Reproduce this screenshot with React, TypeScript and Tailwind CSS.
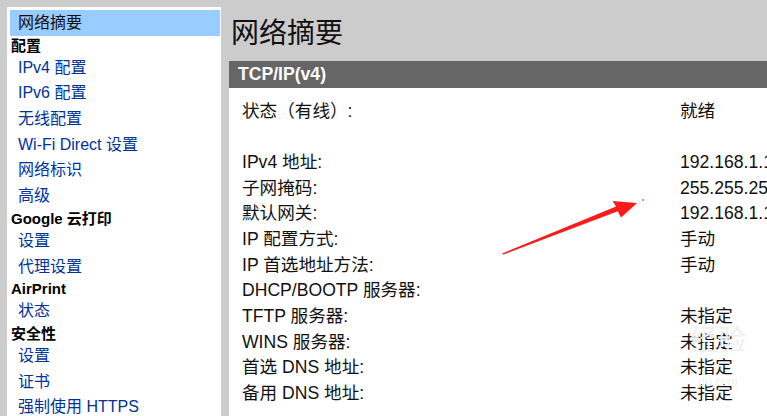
const SANS = 'font-["Liberation_Sans","Noto_Sans_CJK_SC",sans-serif]'

type NavItem = { label: string; kind: 'active' | 'head' | 'link' }

const NAV: NavItem[] = [
  { label: '网络摘要', kind: 'active' },
  { label: '配置', kind: 'head' },
  { label: 'IPv4 配置', kind: 'link' },
  { label: 'IPv6 配置', kind: 'link' },
  { label: '无线配置', kind: 'link' },
  { label: 'Wi-Fi Direct 设置', kind: 'link' },
  { label: '网络标识', kind: 'link' },
  { label: '高级', kind: 'link' },
  { label: 'Google 云打印', kind: 'head' },
  { label: '设置', kind: 'link' },
  { label: '代理设置', kind: 'link' },
  { label: 'AirPrint', kind: 'head' },
  { label: '状态', kind: 'link' },
  { label: '安全性', kind: 'head' },
  { label: '设置', kind: 'link' },
  { label: '证书', kind: 'link' },
  { label: '强制使用 HTTPS', kind: 'link' },
]

// null = empty spacer row
const ROWS: ([string, string] | null)[] = [
  ['状态（有线）:', '就绪'],
  null,
  ['IPv4 地址:', '192.168.1.100'],
  ['子网掩码:', '255.255.255.0'],
  ['默认网关:', '192.168.1.1'],
  ['IP 配置方式:', '手动'],
  ['IP 首选地址方法:', '手动'],
  ['DHCP/BOOTP 服务器:', ''],
  ['TFTP 服务器:', '未指定'],
  ['WINS 服务器:', '未指定'],
  ['首选 DNS 地址:', '未指定'],
  ['备用 DNS 地址:', '未指定'],
]

function Sidebar() {
  return (
    <div className="mt-[7px] ml-[7px] w-[214px] shrink-0 bg-white pt-[3px]">
      {NAV.map((item, i) => {
        if (item.kind === 'head')
          return (
            <div key={i} className="h-[19px] pl-[4px] text-[15px] leading-[19px] font-bold text-black">
              {item.label}
            </div>
          )
        return (
          <div
            key={i}
            className={
              item.kind === 'active'
                ? 'ml-[3px] mr-[1px] h-[25.7px] bg-[#99ccff] pl-[8px] text-[16px] leading-[25.7px] text-[#111]'
                : 'ml-[3px] h-[25.7px] pl-[8px] text-[16px] leading-[25.7px] text-[#003399]'
            }
          >
            {item.label}
          </div>
        )
      })}
    </div>
  )
}

export default function App() {
  return (
    <div className={`relative flex h-[416px] w-[767px] overflow-hidden bg-[#cccccc] ${SANS}`}>
      <Sidebar />

      <div className="ml-[8px] flex min-w-0 flex-1 flex-col">
        {/* Title */}
        <div className="h-[61px] shrink-0 pt-[14px] pl-[2px]">
          <h1 className='text-[28px] leading-[40px] font-normal text-[#111] font-["Liberation_Serif","Noto_Sans_CJK_SC",serif]'>
            网络摘要
          </h1>
        </div>

        {/* Section bar */}
        <div className="h-[27px] shrink-0 bg-[#666666] pl-[9px] text-[17.6px] leading-[27px] font-bold text-white">
          TCP/IP(v4)
        </div>

        {/* Table */}
        <div className="flex-1 bg-white pt-[10.6px] pl-[13px]">
          {ROWS.map((row, i) => (
            <div key={i} className="flex h-[25.7px] items-center text-[17.6px] leading-[25.7px] whitespace-nowrap text-[#111]">
              <div className="w-[438px] shrink-0">{row ? row[0] : ''}</div>
              <div>{row ? row[1] : ''}</div>
            </div>
          ))}
        </div>
      </div>

      {/* faint watermark */}
      <div className="pointer-events-none absolute top-[326px] left-[690px] flex flex-col items-center text-[#efefef]">
        <span className="text-[28px] leading-[30px]">经验</span>
        <span className="mt-[20px] text-[12px] leading-[12px]">du.com</span>
      </div>

      {/* red annotation arrow */}
      <svg className="pointer-events-none absolute top-0 left-0" width="767" height="416" viewBox="0 0 767 416">
        <polygon
          points="502,253.5 616,206.5 612.5,201 637,203 621,217.5 617.7,211.2 503.5,254.5"
          fill="#ff1a1a"
        />
        <circle cx="643" cy="200" r="0.9" fill="#ff4d4d" />
      </svg>
    </div>
  )
}
